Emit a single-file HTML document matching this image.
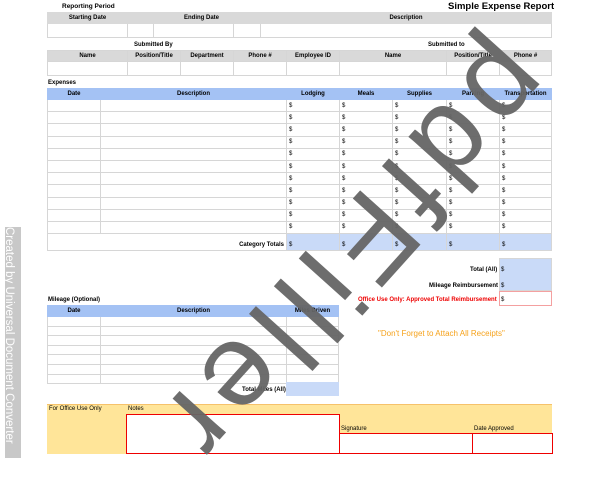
<!DOCTYPE html>
<html><head><meta charset="utf-8">
<style>
*{margin:0;padding:0;box-sizing:border-box}
body{width:600px;height:464px;background:#fff;position:relative;overflow:hidden;font-family:"Liberation Sans",Arial,sans-serif;color:#000}
.a{position:absolute}
.t{font-size:6px;font-weight:bold;white-space:nowrap}
.h{background:#d9d9d9;font-size:6px;font-weight:bold;text-align:center;line-height:10px}
.hb{background:#a4c2f4;font-size:6px;font-weight:bold;text-align:center;line-height:10px}
table{border-collapse:collapse;position:absolute;table-layout:fixed}
td{border:1px solid #d6d6d6;font-size:6px;padding:0 2px;overflow:hidden;white-space:nowrap}
</style></head><body>

<div class="a t" style="left:62px;top:3px;font-size:6.5px">Reporting Period</div>
<div class="a" style="left:448px;top:1px;font-size:9.5px;font-weight:bold">Simple Expense Report</div>

<table style="left:47px;top:12px;width:505px">
<colgroup><col style="width:80px"><col style="width:26px"><col style="width:80px"><col style="width:27px"><col></colgroup>
<tr style="height:10px" class="h"><td style="border-color:#d9d9d9">Starting Date</td><td style="border-color:#d9d9d9"></td><td colspan="2" style="border-color:#d9d9d9;text-align:left;padding-left:30px">Ending Date</td><td style="border-color:#d9d9d9">Description</td></tr>
<tr style="height:14px"><td></td><td></td><td></td><td></td><td></td></tr>
</table>

<div class="a t" style="left:134px;top:42px">Submitted By</div>
<div class="a t" style="left:428px;top:42px">Submitted to</div>
<table style="left:47px;top:50px;width:505px">
<colgroup><col style="width:80px"><col style="width:53px"><col style="width:53px"><col style="width:53px"><col style="width:53px"><col style="width:107px"><col style="width:53px"><col></colgroup>
<tr style="height:10px" class="h"><td>Name</td><td>Position/Title</td><td>Department</td><td>Phone #</td><td>Employee ID</td><td>Name</td><td>Position/Title</td><td>Phone #</td></tr>
<tr style="height:14px"><td></td><td></td><td></td><td></td><td></td><td></td><td></td><td></td></tr>
</table>

<div class="a t" style="left:48px;top:80px">Expenses</div>
<table style="left:47px;top:88px;width:505px">
<colgroup><col style="width:53px"><col style="width:186px"><col style="width:53px"><col style="width:53px"><col style="width:54px"><col style="width:53px"><col></colgroup>
<tr style="height:10px" class="hb"><td style="border-color:#a4c2f4">Date</td><td style="border-color:#a4c2f4">Description</td><td style="border-color:#a4c2f4">Lodging</td><td style="border-color:#a4c2f4">Meals</td><td style="border-color:#a4c2f4">Supplies</td><td style="border-color:#a4c2f4">Parking</td><td style="border-color:#a4c2f4">Transportation</td></tr>
<tr style="height:12.2px"><td></td><td></td><td>$</td><td>$</td><td>$</td><td>$</td><td>$</td></tr>
<tr style="height:12.2px"><td></td><td></td><td>$</td><td>$</td><td>$</td><td>$</td><td>$</td></tr>
<tr style="height:12.2px"><td></td><td></td><td>$</td><td>$</td><td>$</td><td>$</td><td>$</td></tr>
<tr style="height:12.2px"><td></td><td></td><td>$</td><td>$</td><td>$</td><td>$</td><td>$</td></tr>
<tr style="height:12.2px"><td></td><td></td><td>$</td><td>$</td><td>$</td><td>$</td><td>$</td></tr>
<tr style="height:12.2px"><td></td><td></td><td>$</td><td>$</td><td>$</td><td>$</td><td>$</td></tr>
<tr style="height:12.2px"><td></td><td></td><td>$</td><td>$</td><td>$</td><td>$</td><td>$</td></tr>
<tr style="height:12.2px"><td></td><td></td><td>$</td><td>$</td><td>$</td><td>$</td><td>$</td></tr>
<tr style="height:12.2px"><td></td><td></td><td>$</td><td>$</td><td>$</td><td>$</td><td>$</td></tr>
<tr style="height:12.2px"><td></td><td></td><td>$</td><td>$</td><td>$</td><td>$</td><td>$</td></tr>
<tr style="height:12.2px"><td></td><td></td><td>$</td><td>$</td><td>$</td><td>$</td><td>$</td></tr>
<tr style="height:17px;vertical-align:bottom"><td colspan="2" style="text-align:right;font-weight:bold;padding-bottom:2px">Category Totals</td><td style="background:#c9daf8;padding-bottom:2px">$</td><td style="background:#c9daf8;padding-bottom:2px">$</td><td style="background:#c9daf8;padding-bottom:2px">$</td><td style="background:#c9daf8;padding-bottom:2px">$</td><td style="background:#c9daf8;padding-bottom:2px">$</td></tr>
</table>

<div class="a" style="left:499px;top:258px;width:53px;height:33px;background:#c9daf8;border:1px solid #d6d6d6"></div>
<div class="a t" style="left:470px;top:267px">Total (All)</div><div class="a" style="left:501px;top:267px;font-size:6px">$</div>
<div class="a t" style="left:429px;top:283px">Mileage Reimbursement</div><div class="a" style="left:501px;top:283px;font-size:6px">$</div>
<div class="a" style="left:499px;top:291px;width:53px;height:15px;border:1px solid #f4a0a0"></div>
<div class="a t" style="left:358px;top:297px;color:#e00">Office Use Only: Approved Total Reimbursement</div><div class="a" style="left:501px;top:297px;font-size:6px">$</div>

<div class="a" style="left:378px;top:329px;font-size:8px;color:#f6a21b">"Don't Forget to Attach All Receipts"</div>

<div class="a t" style="left:48px;top:297px">Mileage (Optional)</div>
<table style="left:47px;top:305px;width:292px">
<colgroup><col style="width:53px"><col style="width:186px"><col></colgroup>
<tr style="height:10px" class="hb"><td style="border-color:#a4c2f4">Date</td><td style="border-color:#a4c2f4">Description</td><td style="border-color:#a4c2f4">Miles Driven</td></tr>
<tr style="height:9.6px"><td></td><td></td><td></td></tr>
<tr style="height:9.6px"><td></td><td></td><td></td></tr>
<tr style="height:9.6px"><td></td><td></td><td></td></tr>
<tr style="height:9.6px"><td></td><td></td><td></td></tr>
<tr style="height:9.6px"><td></td><td></td><td></td></tr>
<tr style="height:9.6px"><td></td><td></td><td></td></tr>
<tr style="height:9.6px"><td></td><td></td><td></td></tr>
</table>
<div class="a" style="left:286px;top:382px;width:53px;height:14px;background:#c9daf8"></div>
<div class="a t" style="left:242px;top:387px">Total Miles (All)</div>

<div class="a" style="left:47px;top:404px;width:505px;height:50px;background:#ffe599;border-top:1px solid #f6c26b"></div>
<div class="a" style="left:49px;top:406px;font-size:6px">For Office Use Only</div>
<div class="a" style="left:128px;top:406px;font-size:6px">Notes</div>
<div class="a" style="left:126px;top:414px;width:214px;height:40px;background:#fff;border:1px solid #e00"></div>
<div class="a" style="left:341px;top:426px;font-size:6px">Signature</div>
<div class="a" style="left:474px;top:426px;font-size:6px">Date Approved</div>
<div class="a" style="left:339px;top:433px;width:134px;height:21px;background:#fff;border:1px solid #e00"></div>
<div class="a" style="left:472px;top:433px;width:81px;height:21px;background:#fff;border:1px solid #e00"></div>

<div class="a" style="left:5px;top:227px;width:16px;height:231px;background:#c8c8c8"></div>
<div class="a" style="left:13px;top:227px;width:231px;height:16px;transform-origin:0 0;transform:rotate(90deg) translate(0,-4px);color:#fff;font-size:11.5px;line-height:16px;white-space:nowrap">Created by Universal Document Converter</div>

<div class="a" style="left:572px;top:103px;transform-origin:0 0;transform:rotate(132deg);font-size:118px;letter-spacing:11px;line-height:1;color:#666;opacity:.95;white-space:nowrap;font-family:'Liberation Sans',sans-serif">pdfFiller</div>
</body></html>
